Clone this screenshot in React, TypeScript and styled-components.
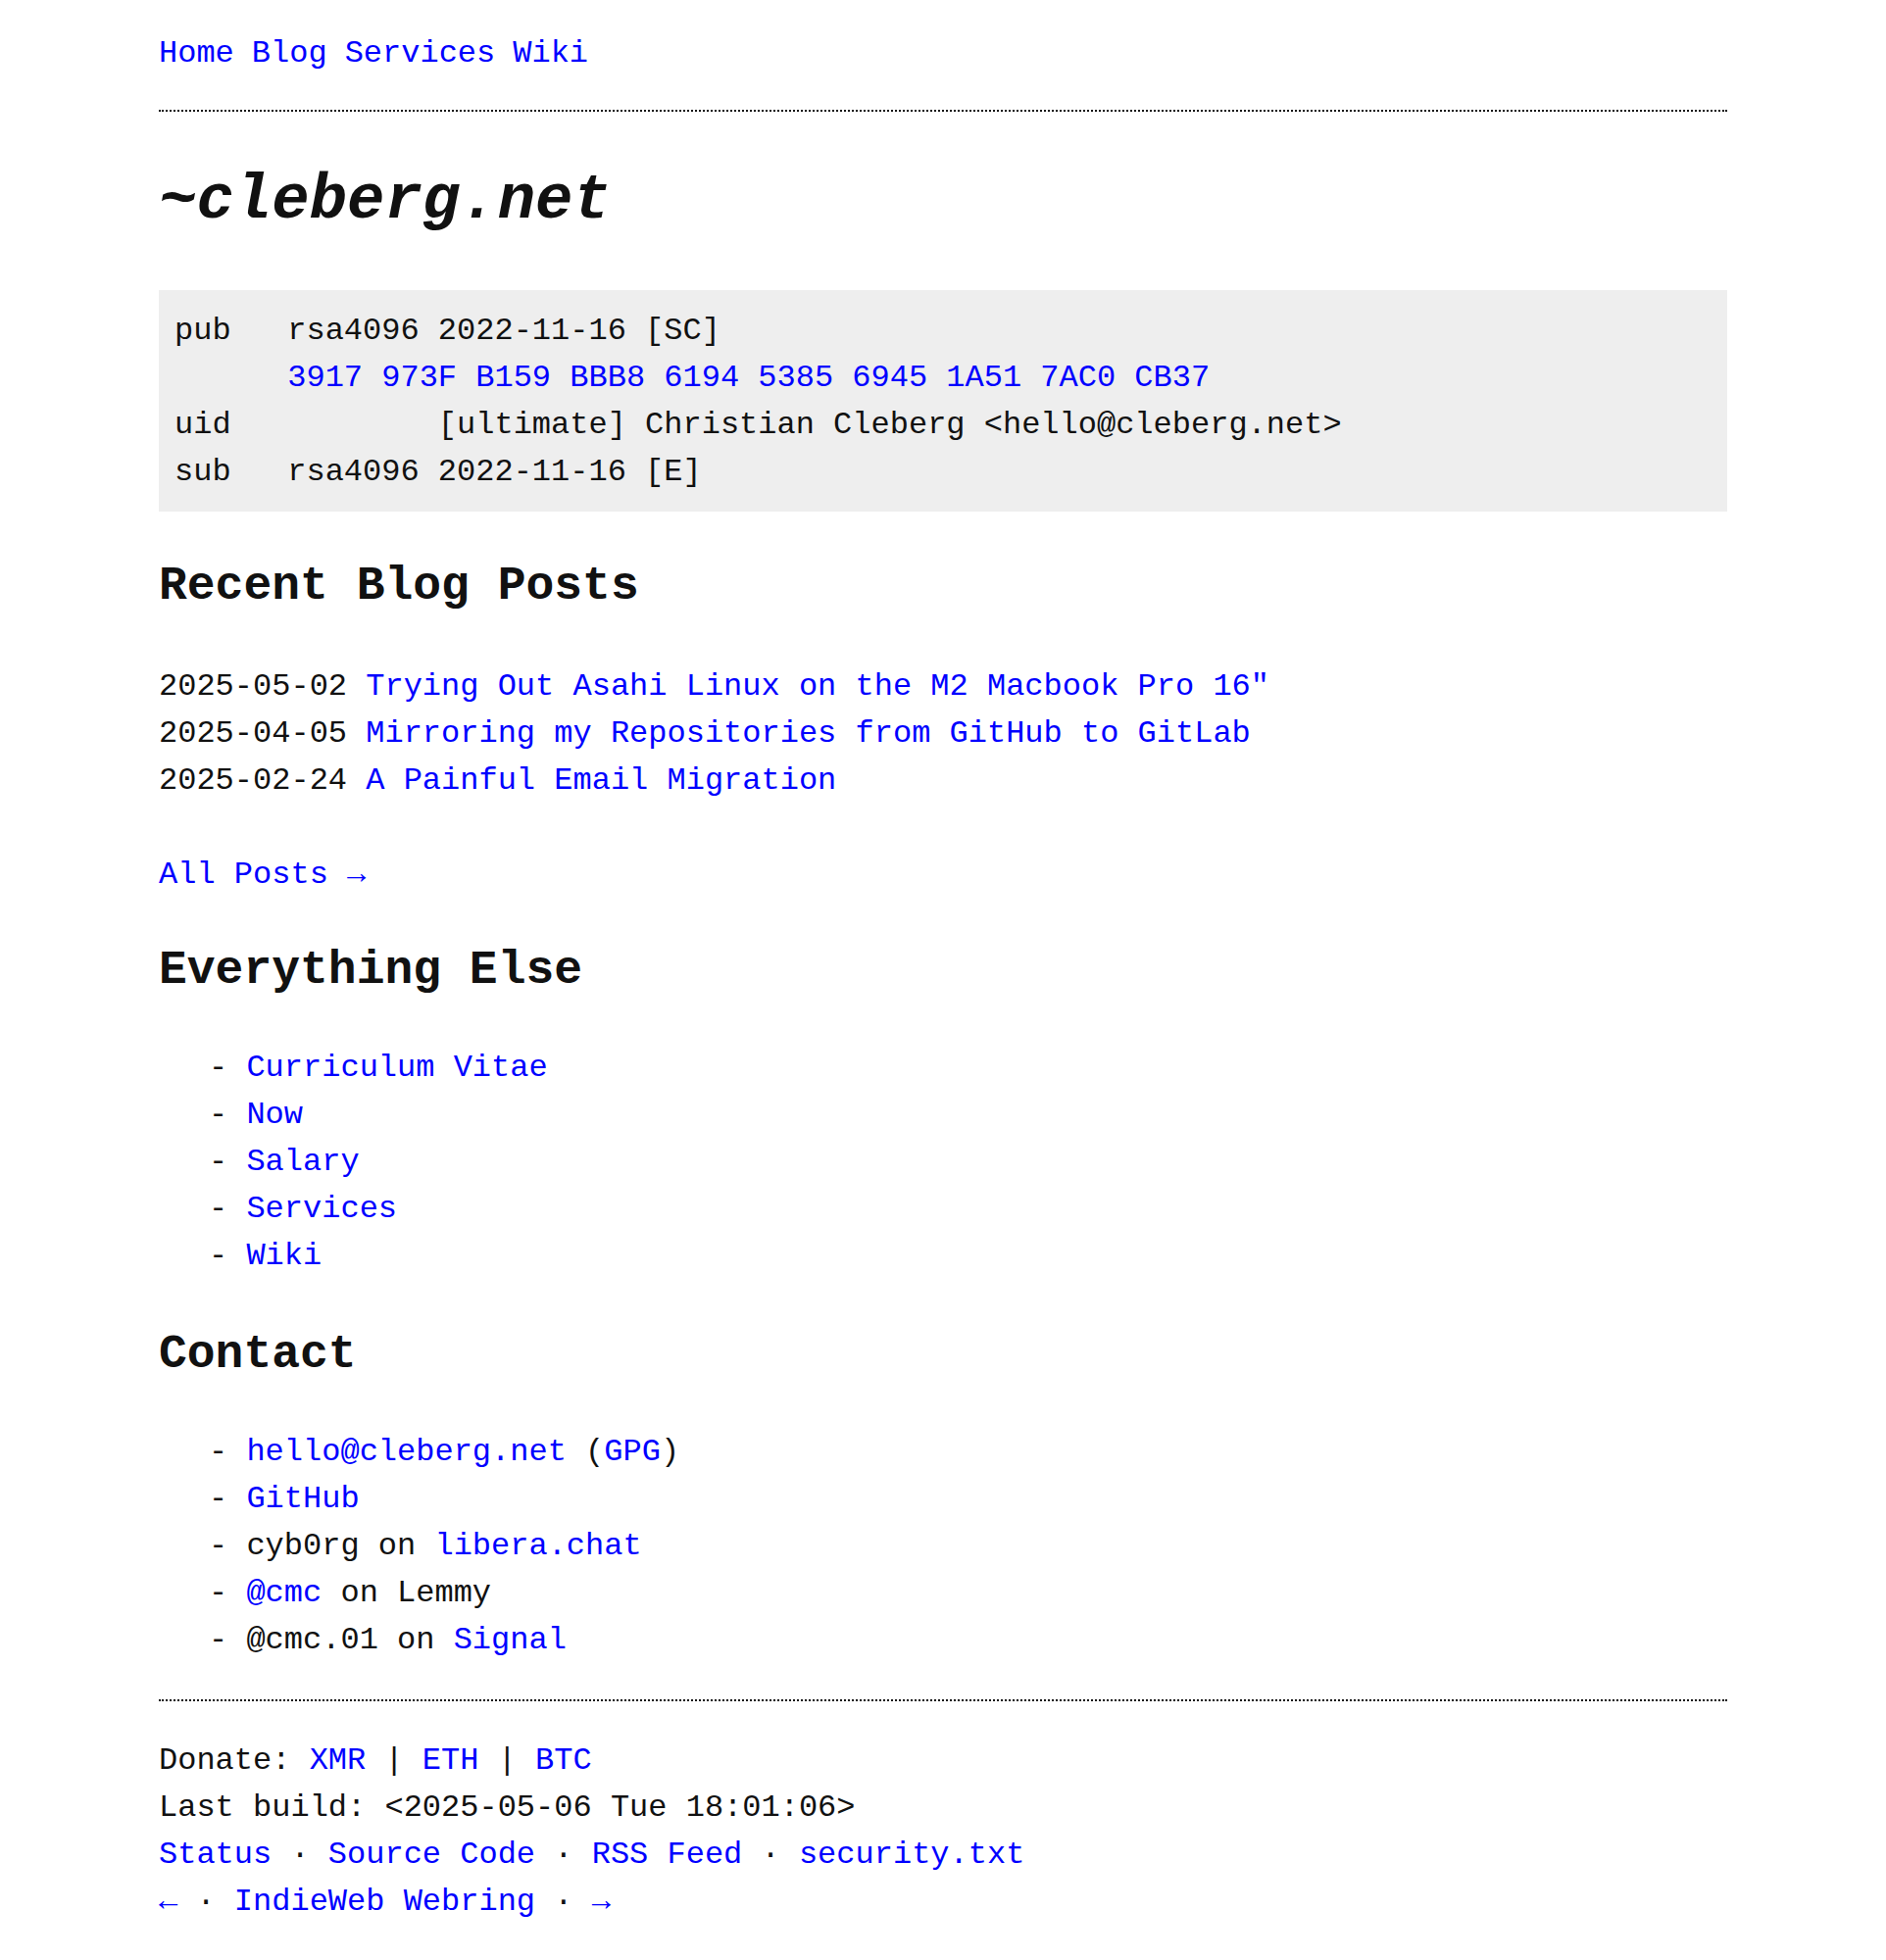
import styled, { createGlobalStyle } from 'styled-components';

const GlobalStyle = createGlobalStyle`
  html, body {
    margin: 0;
    padding: 0;
    background: #ffffff;
  }

  body {
    font-family: 'Liberation Mono', 'DejaVu Sans Mono', monospace;
    font-size: 32px;
    line-height: 1.5;
    color: #111111;
  }
`;

const Page = styled.div`
  max-width: 1600px;
  margin: 0 auto;
  padding: 31px 0 30px;
`;

const Link = styled.a`
  color: #0000ff;
  text-decoration: none;
`;

const Nav = styled.nav`
  display: flex;
  gap: 18px;
  line-height: 48px;
`;

const Rule = styled.hr<{ $top: number }>`
  margin: ${({ $top }) => $top}px 0 0;
  border: 0;
  border-top: 2px dotted #111111;
  height: 0;
`;

const Title = styled.h1`
  margin: 43px 0 0;
  font-size: 64px;
  line-height: 96px;
  font-style: italic;
  font-weight: 700;
`;

const KeyBlock = styled.pre`
  margin: 43px 0 0;
  padding: 18px 16px 16px;
  background: #eeeeee;
  font-family: inherit;
  font-size: 32px;
  line-height: 48px;
  white-space: pre;
`;

const SectionHeading = styled.h2<{ $top?: number; $bottom?: number }>`
  margin: ${({ $top = 40 }) => $top}px 0 ${({ $bottom = 40 }) => $bottom}px;
  font-size: 48px;
  line-height: 72px;
  font-weight: 700;
`;

const PostList = styled.div`
  display: flex;
  flex-direction: column;
`;

const PostRow = styled.div`
  white-space: pre;
`;

const MoreLine = styled.p`
  margin: 48px 0 0;
`;

const DashList = styled.ul`
  list-style: none;
  margin: 0;
  padding: 0 0 0 51px;
`;

const DashItem = styled.li`
  white-space: pre;

  &::before {
    content: '- ';
  }
`;

const Footer = styled.footer`
  margin-top: 37px;
  display: flex;
  flex-direction: column;
`;

const FooterLine = styled.div`
  white-space: pre;
`;

const posts = [
  { date: '2025-05-02', title: 'Trying Out Asahi Linux on the M2 Macbook Pro 16"' },
  { date: '2025-04-05', title: 'Mirroring my Repositories from GitHub to GitLab' },
  { date: '2025-02-24', title: 'A Painful Email Migration' },
];

const elsewhere = ['Curriculum Vitae', 'Now', 'Salary', 'Services', 'Wiki'];

export default function App() {
  return (
    <>
      <GlobalStyle />
      <Page>
        <Nav>
          <Link href="#">Home</Link>
          <Link href="#">Blog</Link>
          <Link href="#">Services</Link>
          <Link href="#">Wiki</Link>
        </Nav>

        <Rule $top={33} />

        <Title>~cleberg.net</Title>

        <KeyBlock>
          {'pub   rsa4096 2022-11-16 [SC]\n      '}
          <Link href="#">3917 973F B159 BBB8 6194 5385 6945 1A51 7AC0 CB37</Link>
          {'\nuid           [ultimate] Christian Cleberg <hello@cleberg.net>\nsub   rsa4096 2022-11-16 [E]'}
        </KeyBlock>

        <SectionHeading $bottom={43}>Recent Blog Posts</SectionHeading>
        <PostList>
          {posts.map((post) => (
            <PostRow key={post.date}>
              {post.date} <Link href="#">{post.title}</Link>
            </PostRow>
          ))}
        </PostList>
        <MoreLine>
          <Link href="#">All Posts →</Link>
        </MoreLine>

        <SectionHeading $top={37}>Everything Else</SectionHeading>
        <DashList>
          {elsewhere.map((item) => (
            <DashItem key={item}>
              <Link href="#">{item}</Link>
            </DashItem>
          ))}
        </DashList>

        <SectionHeading>Contact</SectionHeading>
        <DashList>
          <DashItem>
            <Link href="#">hello@cleberg.net</Link> (<Link href="#">GPG</Link>)
          </DashItem>
          <DashItem>
            <Link href="#">GitHub</Link>
          </DashItem>
          <DashItem>
            cyb0rg on <Link href="#">libera.chat</Link>
          </DashItem>
          <DashItem>
            <Link href="#">@cmc</Link> on Lemmy
          </DashItem>
          <DashItem>
            @cmc.01 on <Link href="#">Signal</Link>
          </DashItem>
        </DashList>

        <Rule $top={36} />

        <Footer>
          <FooterLine>
            Donate: <Link href="#">XMR</Link> | <Link href="#">ETH</Link> | <Link href="#">BTC</Link>
          </FooterLine>
          <FooterLine>Last build: &lt;2025-05-06 Tue 18:01:06&gt;</FooterLine>
          <FooterLine>
            <Link href="#">Status</Link> · <Link href="#">Source Code</Link> · <Link href="#">RSS Feed</Link> ·{' '}
            <Link href="#">security.txt</Link>
          </FooterLine>
          <FooterLine>
            <Link href="#">←</Link> · <Link href="#">IndieWeb Webring</Link> · <Link href="#">→</Link>
          </FooterLine>
        </Footer>
      </Page>
    </>
  );
}
